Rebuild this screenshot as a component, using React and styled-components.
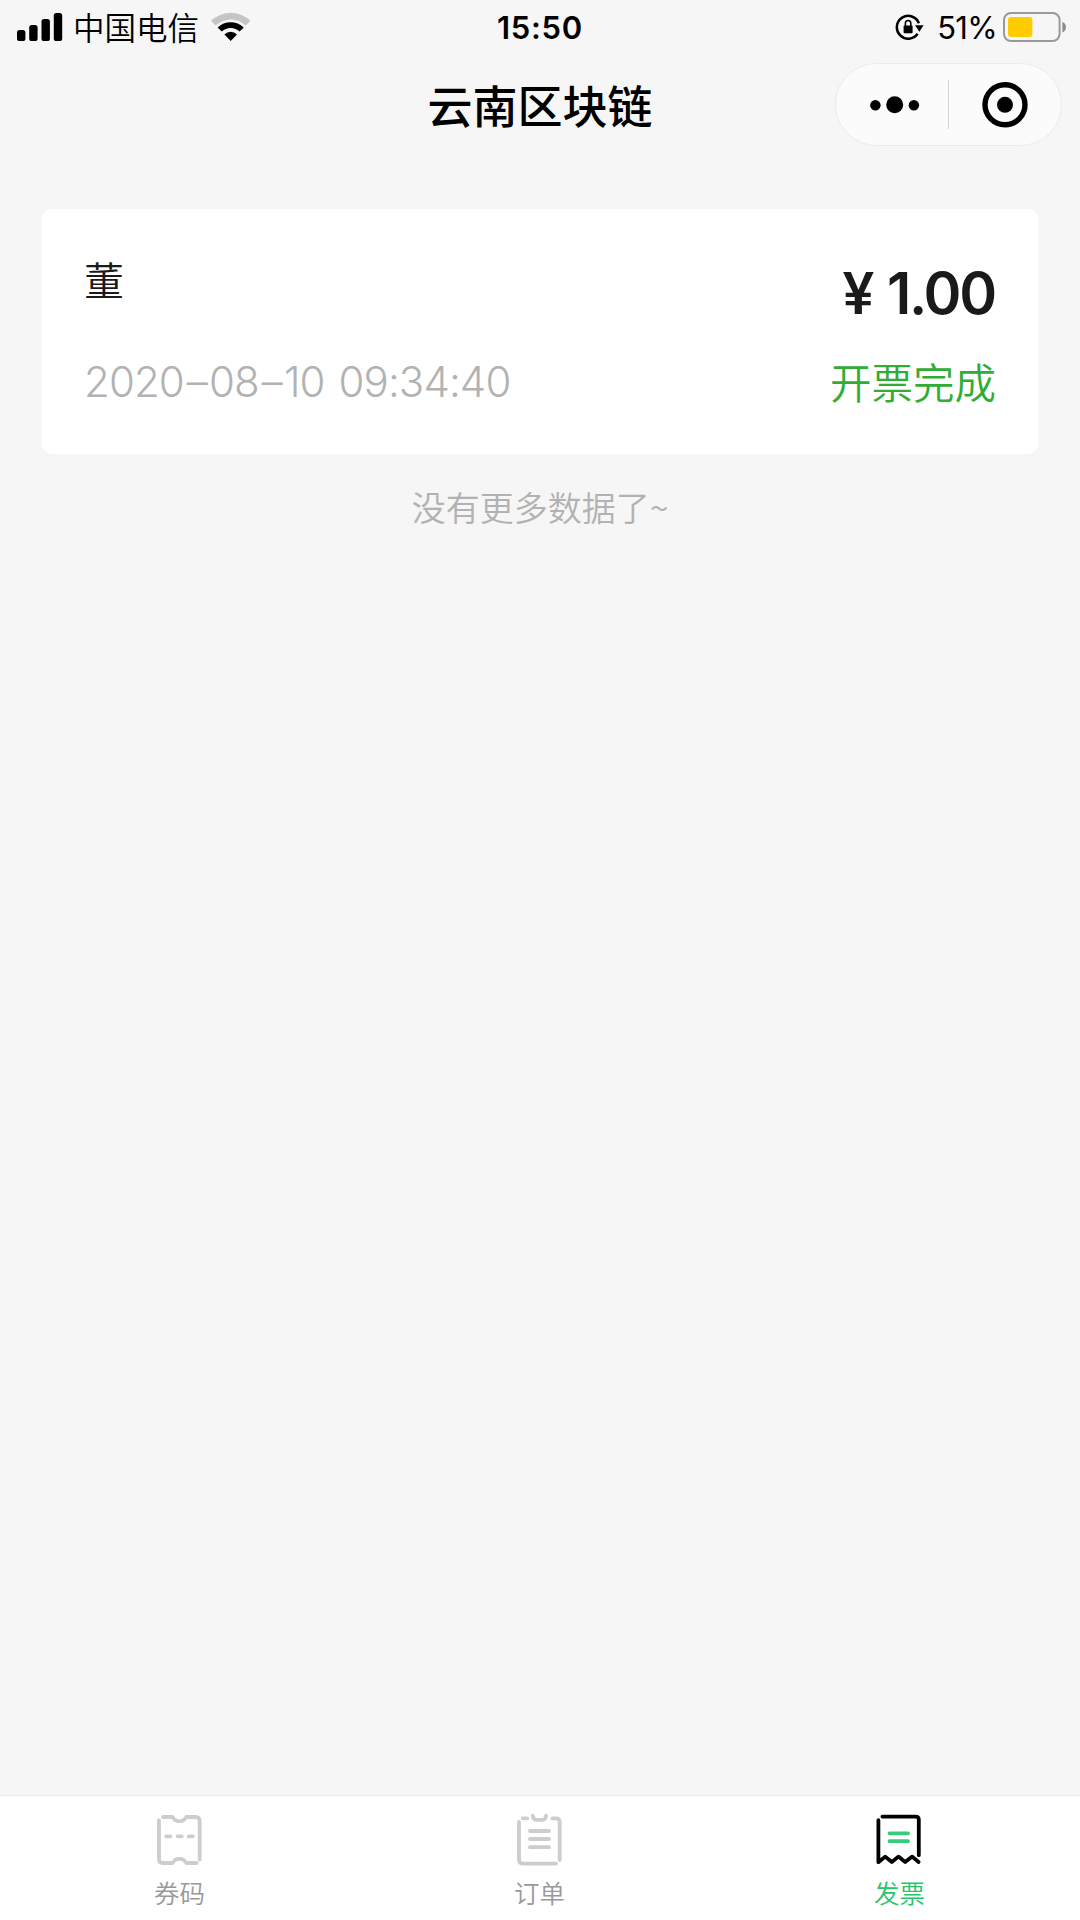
import styled, { createGlobalStyle } from 'styled-components';

const records = [
    { id: 1, name: '董', date: ['2020', '08', '10'], time: '09:34:40', amount: '1.00', status: '开票完成' },
];

const tabs = [
    { key: 'coupon', label: '券码', Icon: CouponIcon },
    { key: 'order', label: '订单', Icon: OrderIcon },
    { key: 'invoice', label: '发票', Icon: InvoiceIcon },
];

function CouponIcon() {
    return (
        <TabSvg viewBox="0 0 50 56">
            <path d="M4 8.2V47q0 4 4 4h9.6a7.6 7.6 0 0 1 13.6 0H41.7" />
            <path d="M8 5h9.6a7.6 7.6 0 0 0 13.6 0H40.5q4.2 0 4.2 4.2V47.5" />
            <path d="M11.2 24.3h4.2M22.6 24.3h4.2M33.6 24.3h4.2" />
        </TabSvg>
    );
}

function OrderIcon() {
    return (
        <TabSvg viewBox="0 0 50 56">
            <path d="M4 10V47.5q0 4.2 4.2 4.2H41" />
            <path d="M7.8 6.4h4.4M37.3 6.4h3.4q4 0 4 4V48" />
            <path d="M17.7 3.7q.6 4.2 4 4.2h5.4q3.4 0 4-4.2" />
            <path d="M15 19H34M15 27H34M15 35.2H34" />
        </TabSvg>
    );
}

function InvoiceIcon() {
    return (
        <TabSvg viewBox="0 0 50 56" className="invoice">
            <path d="M3.4 8.2V50.2L10.2 44.6 16.8 50 23.4 44.6 30.2 50 37.2 44.6 43.6 50" />
            <path d="M7.4 4.6H40.6q3.2 0 3.2 3.2V43.2" />
            <path className="mark" d="M14.5 21.3H33M14.5 29.2H33" />
        </TabSvg>
    );
}

function StatusBar() {
    return (
        <Status>
            <StatusLeft>
                <svg width="46" height="30" viewBox="0 0 46 30">
                    <rect x="0" y="18" width="8.4" height="11" rx="2.6" />
                    <rect x="12.2" y="13" width="8.4" height="16" rx="2.6" />
                    <rect x="24.5" y="7" width="8.4" height="22" rx="2.6" />
                    <rect x="36.8" y="1" width="8.4" height="28" rx="2.6" />
                </svg>
                <Carrier>中国电信</Carrier>
                <svg width="40" height="30" viewBox="0 0 40 30">
                    <path d="M0 8.8A28.4 28.4 0 0 1 39.4 8.8L34.6 13.5A21.4 21.4 0 0 0 4.8 13.5Z" fill="#c5c5c5" />
                    <path d="M6.6 15.5A19 19 0 0 1 32.8 15.5L28.6 19.6A13 13 0 0 0 10.8 19.6Z" />
                    <path d="M13.4 22.4A9 9 0 0 1 26 22.4L19.7 29Z" />
                </svg>
            </StatusLeft>
            <Clock>15:50</Clock>
            <StatusRight>
                <svg width="30" height="28" viewBox="0 0 30 28">
                    <path d="M22.6 20.8A11.4 11.4 0 1 1 23.9 10.2" fill="none" stroke="#000" strokeWidth="2.5" />
                    <path d="M20 12.2H28.6L24.4 18.8Z" />
                    <rect x="8.6" y="12.4" width="9" height="7.8" rx="1" />
                    <path d="M10.4 13V10.2a2.7 2.7 0 0 1 5.4 0V13" fill="none" stroke="#000" strokeWidth="1.6" />
                </svg>
                <Percent>51%</Percent>
                <svg width="64" height="30" viewBox="0 0 64 30">
                    <rect x="1" y="1" width="55.6" height="28" rx="7" fill="none" stroke="#999" strokeWidth="2" />
                    <rect x="5" y="5" width="24.4" height="20" rx="3" fill="#ffcc00" />
                    <path d="M59.4 10a5.6 5.6 0 0 1 0 10.4Z" fill="#8c8c8c" />
                </svg>
            </StatusRight>
        </Status>
    );
}

function Navbar() {
    return (
        <Nav>
            <Title>云南区块链</Title>
            <Capsule>
                <CapsuleBtn aria-label="more">
                    <svg width="50" height="18" viewBox="0 0 50 18">
                        <circle cx="5.4" cy="9.2" r="5.2" />
                        <circle cx="24.7" cy="8.8" r="8.5" />
                        <circle cx="43.9" cy="9.2" r="5.2" />
                    </svg>
                </CapsuleBtn>
                <Divider />
                <CapsuleBtn aria-label="close">
                    <svg width="46" height="46" viewBox="0 0 46 46">
                        <circle cx="23" cy="22.8" r="20" fill="none" stroke="#000" strokeWidth="5.4" />
                        <circle cx="23" cy="22.8" r="8" />
                    </svg>
                </CapsuleBtn>
            </Capsule>
        </Nav>
    );
}

function App() {
    const current = 'invoice';

    return (
        <Page>
            <GlobalStyle />
            <StatusBar />
            <Navbar />
            <List>
                {records.map((item) => (
                    <Card key={item.id}>
                        <CardCol>
                            <Name>{item.name}</Name>
                            <Time>
                                {item.date[0]}<Dash>–</Dash>{item.date[1]}<Dash>–</Dash>{item.date[2]} {item.time}
                            </Time>
                        </CardCol>
                        <CardCol $right>
                            <Amount><Yen>¥</Yen>{item.amount}</Amount>
                            <State>{item.status}</State>
                        </CardCol>
                    </Card>
                ))}
                <NoMore>没有更多数据了~</NoMore>
            </List>
            <TabBar>
                {tabs.map(({ key, label, Icon }) => (
                    <Tab key={key} $active={key === current}>
                        <Icon />
                        <span>{label}</span>
                    </Tab>
                ))}
            </TabBar>
        </Page>
    );
}

export default App

const GlobalStyle = createGlobalStyle`
    * {
        box-sizing: border-box;
    }
    body {
        margin: 0;
        background: #f6f6f6;
        font-family: "Noto Sans CJK SC", sans-serif;
    }
    svg {
        display: block;
        flex-shrink: 0;
    }
`;

const Page = styled.div`
    display: flex;
    flex-direction: column;
    width: 1080px;
    height: 1920px;
    overflow: hidden;
    background: #f6f6f6;
`;

const Status = styled.div`
    display: grid;
    grid-template-columns: 1fr auto 1fr;
    align-items: center;
    height: 53px;
    padding: 0 13px 0 17px;
    color: #000;
`;

const StatusLeft = styled.div`
    display: flex;
    align-items: center;
`;

const Carrier = styled.span`
    margin: 0 12px 2px 10px;
    font-size: 31.5px;
    line-height: 51px;
    font-weight: 350;
`;

const Clock = styled.span`
    margin-left: -4px;
    padding-top: 1px;
    font-family: Inter, sans-serif;
    font-size: 31px;
    line-height: 53px;
    font-weight: 600;
    letter-spacing: 0.7px;
`;

const StatusRight = styled.div`
    display: flex;
    align-items: center;
    justify-content: flex-end;
`;

const Percent = styled.span`
    margin: 0 6px 0 12px;
    padding-top: 1px;
    font-family: Inter, sans-serif;
    font-size: 31px;
    line-height: 53px;
    font-weight: 400;
    letter-spacing: -0.7px;
`;

const Nav = styled.div`
    display: grid;
    grid-template-columns: 1fr auto 1fr;
    align-items: center;
    height: 103px;
    padding: 0 18px;
`;

const Title = styled.h1`
    grid-column: 2;
    margin: 0;
    font-size: 45px;
    line-height: 60px;
    font-weight: 500;
    color: #000;
`;

const Capsule = styled.div`
    display: grid;
    grid-template-columns: 112px 1px 1fr;
    align-items: center;
    justify-self: end;
    width: 227px;
    height: 83px;
    border: 1px solid #ebebeb;
    border-radius: 42px;
    background: #fbfbfb;
`;

const CapsuleBtn = styled.button`
    display: flex;
    align-items: center;
    justify-content: center;
    height: 100%;
    padding: 0;
    border: 0;
    background: none;

    &:first-child {
        padding-left: 6px;
    }
`;

const Divider = styled.span`
    width: 1px;
    height: 49px;
    background: #d3d3d3;
`;

const List = styled.main`
    flex: 1;
    padding: 53px 42px 0;
`;

const Card = styled.section`
    display: flex;
    justify-content: space-between;
    height: 245px;
    padding: 41px 42px 43px;
    border-radius: 10px;
    background: #fff;
`;

const CardCol = styled.div`
    display: flex;
    flex-direction: column;
    justify-content: space-between;
    align-items: ${({ $right }) => ($right ? 'flex-end' : 'flex-start')};
`;

const Name = styled.div`
    font-size: 40px;
    line-height: 58px;
    font-weight: 350;
    color: #1a1a1a;
`;

const Time = styled.div`
    font-family: Inter, sans-serif;
    font-size: 42px;
    line-height: 58px;
    font-weight: 350;
    letter-spacing: -0.9px;
    word-spacing: 3px;
    color: #b2b2b2;
    white-space: nowrap;
`;

const Dash = styled.span`
    margin: 0 2px 0 3px;
`;

const Amount = styled.div`
    display: flex;
    align-items: baseline;
    padding-right: 1px;
    font-family: Inter, sans-serif;
    font-size: 57.5px;
    line-height: 86px;
    font-weight: 580;
    letter-spacing: -2.2px;
    color: #1a1a1a;
`;

const Yen = styled.span`
    margin-right: 15px;
    font-family: Roboto, sans-serif;
    font-size: 59px;
    font-weight: 500;
`;

const State = styled.div`
    font-size: 41.5px;
    line-height: 60px;
    font-weight: 350;
    color: #31ad36;
`;

const NoMore = styled.p`
    margin: 28px 0 0;
    font-size: 34px;
    line-height: 50px;
    font-weight: 350;
    text-align: center;
    color: #b2b2b2;
`;

const TabBar = styled.nav`
    display: flex;
    height: 125px;
    border-top: 1px solid #ebebeb;
    background: #fff;
`;

const Tab = styled.div`
    display: flex;
    flex: 1;
    flex-direction: column;
    align-items: center;
    padding-top: 16px;
    font-size: 25.5px;
    line-height: 36px;
    font-weight: 350;
    color: ${({ $active }) => ($active ? '#26c56d' : '#999')};

    span {
        margin-top: 6px;
        margin-right: 1px;
    }
`;

const TabSvg = styled.svg`
    width: 50px;
    height: 56px;
    fill: none;
    stroke: #cdcdcd;
    stroke-width: 3.8;
    stroke-linecap: round;
    stroke-linejoin: round;

    &.invoice {
        stroke: #000;
    }

    .mark {
        stroke: #34cd7b;
    }
`;
